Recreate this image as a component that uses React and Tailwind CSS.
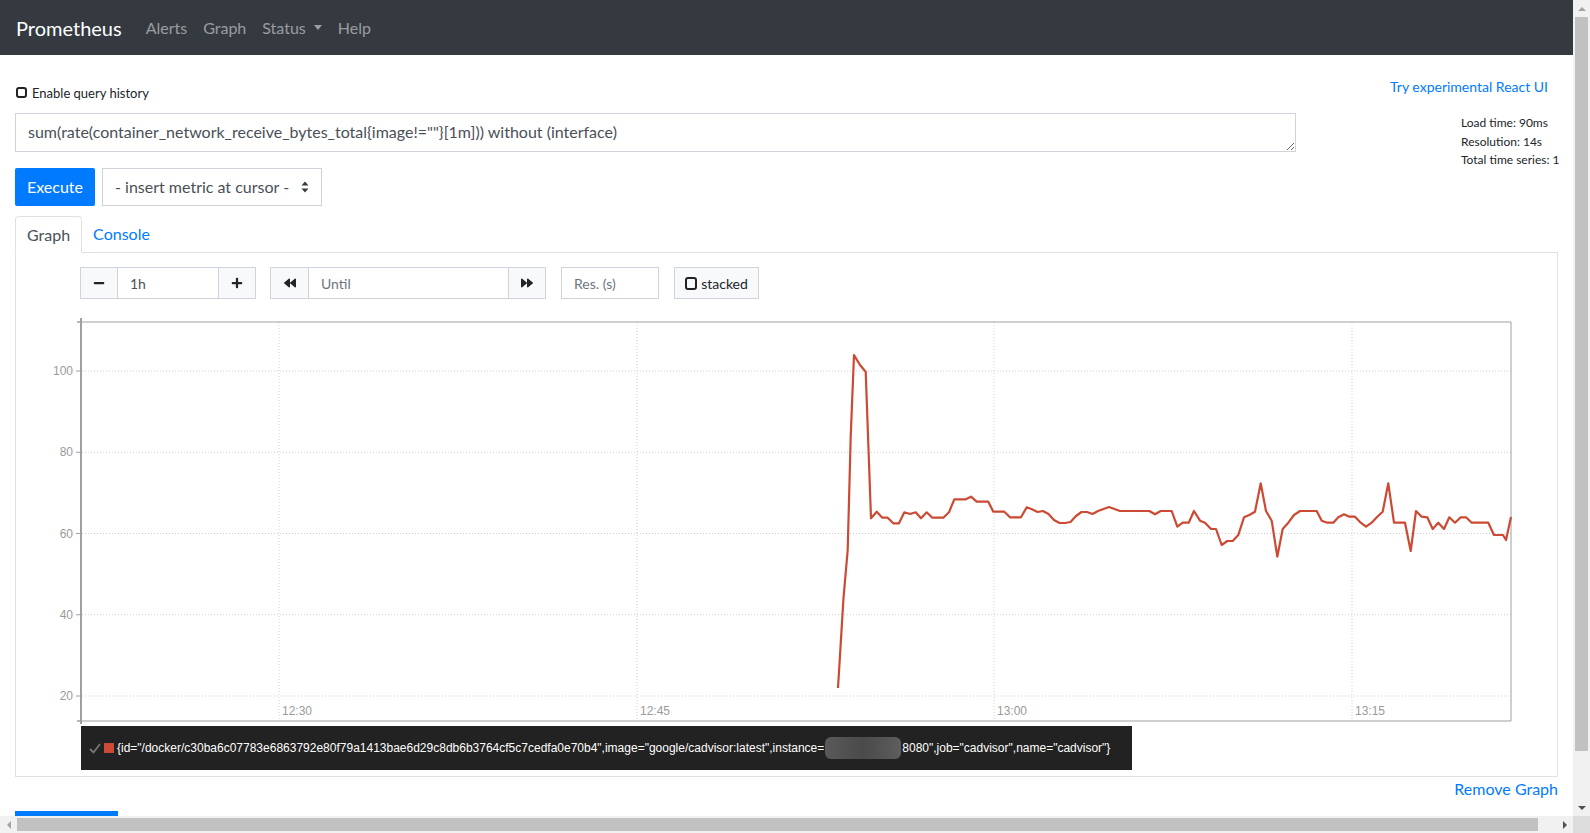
import { FaMinus, FaPlus, FaBackward, FaForward } from "react-icons/fa";

const Y_TICKS = [
  ["100", 371],
  ["80", 452.25],
  ["60", 533.5],
  ["40", 614.75],
  ["20", 696],
];

const X_TICKS = [
  ["12:30", 279],
  ["12:45", 637],
  ["13:00", 994],
  ["13:15", 1352],
];

// series points, page coordinates
const POINTS = [
  [838, 688], [843.5, 598], [847.7, 550], [850.7, 436.7], [854, 355], [860, 365], [865.7, 371.7],
  [871, 518.3], [876.7, 511.7], [882.3, 517.7], [887.7, 517.7], [893.3, 523.3], [899, 523.3],
  [904.3, 512.3], [910, 514], [915.7, 512.3], [921, 518.3], [926.7, 512.3], [932.3, 517.7],
  [943.3, 517.7], [949, 512.3], [954.3, 499.3], [965.7, 499.3], [971, 496.7], [976.7, 501.7],
  [988.3, 501.7], [993.3, 511.7], [1004.3, 511.7], [1010, 517.3], [1021, 517.3], [1026.7, 507.3],
  [1032, 509.3], [1037.5, 512], [1043, 511], [1048.5, 514], [1054, 520], [1059.5, 523], [1065, 523],
  [1070.5, 522], [1076, 516], [1081.5, 512], [1087, 512], [1092.5, 514], [1098, 511], [1103.5, 509],
  [1109, 507], [1114.5, 509], [1120, 511], [1125.5, 511], [1131, 511], [1136.5, 511], [1140, 511],
  [1149.3, 511], [1155, 514.3], [1160.7, 511], [1171.7, 511], [1177.3, 526.7], [1182.7, 522.7],
  [1188.7, 522.7], [1194, 511], [1200, 520.7], [1205, 522.7], [1211, 529], [1216, 529], [1221.7, 545],
  [1227.3, 541], [1232.7, 541], [1238.3, 535], [1244, 517.3], [1249.3, 515], [1255, 511.7],
  [1260.7, 483.3], [1266, 511], [1271.7, 520.7], [1277.3, 556.7], [1282.7, 529], [1288.3, 522.7],
  [1294, 515], [1300, 511], [1316.7, 511], [1321.7, 520.7], [1327.3, 522.7], [1333.3, 522.7],
  [1338.3, 517.3], [1344, 514.3], [1349.3, 516.7], [1355, 516.7], [1360.7, 522.7], [1366, 526.7],
  [1371.7, 522.7], [1377.3, 516.7], [1382.7, 511.7], [1388.3, 483.3], [1394, 522.7], [1405, 522.7],
  [1410.7, 551], [1416, 511], [1421.7, 516.7], [1427.3, 517.3], [1432.7, 529], [1438.3, 522.7],
  [1444, 529], [1449.3, 517.3], [1455, 522.7], [1460.7, 517.3], [1466, 517.3], [1471.7, 522.7],
  [1488.3, 522.7], [1494, 535], [1503, 535], [1506, 540], [1511, 517],
];

function CheckBox({ className = "" }) {
  return <span className={"inline-block rounded-[3px] border-2 border-[#222] " + className} />;
}

function Navbar() {
  return (
    <nav className="flex h-[55px] items-center bg-[#343a40] pl-[16px]">
      <span className="mr-[16px] text-[20px] text-white">Prometheus</span>
      {["Alerts", "Graph"].map((l) => (
        <span key={l} className="px-[8px] text-[16px] text-white/50">{l}</span>
      ))}
      <span className="flex items-center px-[8px] text-[16px] text-white/50">
        Status
        <span className="ml-[8px] inline-block h-0 w-0 border-x-[4.5px] border-t-[5px] border-x-transparent border-t-[#9a9da0]" />
      </span>
      <span className="px-[8px] text-[16px] text-white/50">Help</span>
    </nav>
  );
}

function Chart() {
  const line = POINTS.map((p) => p.join(",")).join(" ");
  return (
    <svg className="block" width="1541" height="425" viewBox="16 299 1541 425">
      <g stroke="#cfcfcf" strokeWidth="1" strokeDasharray="1 2">
        {Y_TICKS.map(([l, y]) => (
          <line key={l} x1="82" y1={y} x2="1511" y2={y} />
        ))}
        {X_TICKS.map(([l, x]) => (
          <line key={l} x1={x} y1="322" x2={x} y2="720" />
        ))}
      </g>
      <g stroke="#a0a0a0" fill="none">
        <line x1="81" y1="322" x2="1511" y2="322" strokeWidth="1" />
        <line x1="1511" y1="322" x2="1511" y2="721" strokeWidth="1" />
        <line x1="81" y1="721" x2="1511" y2="721" strokeWidth="1.2" />
        <line x1="81" y1="318" x2="81" y2="724" strokeWidth="2" />
        <line x1="77" y1="322" x2="81" y2="322" strokeWidth="1.5" />
        <line x1="77" y1="721" x2="81" y2="721" strokeWidth="1.5" />
        {Y_TICKS.map(([l, y]) => (
          <line key={l} x1="76" y1={y} x2="81" y2={y} strokeWidth="1" />
        ))}
      </g>
      <g className="font-['Liberation_Sans',sans-serif]" fontSize="12" fill="#9a9a9a">
        {Y_TICKS.map(([l, y]) => (
          <text key={l} x="73" y={y + 4} textAnchor="end">{l}</text>
        ))}
        {X_TICKS.map(([l, x]) => (
          <text key={l} x={x + 3} y="715">{l}</text>
        ))}
      </g>
      <polyline points={line} fill="none" stroke="#cc4a33" strokeWidth="2.2" strokeLinejoin="round" />
    </svg>
  );
}

function Legend() {
  return (
    <div className="ml-[65px] mt-[2px] flex h-[44px] w-[1051px] items-center bg-[#222] pl-[8px] font-['Liberation_Sans',sans-serif] text-[12px] text-white">
      <svg width="12" height="11" viewBox="0 0 12 11" className="mr-[3px]">
        <path d="M1 6 L4.5 9.5 L11 1" stroke="#777" strokeWidth="1.8" fill="none" />
      </svg>
      <span className="mr-[3px] inline-block h-[10px] w-[10px] bg-[#cc4a33]" />
      <span className="whitespace-nowrap">
        {'{id="/docker/c30ba6c07783e6863792e80f79a1413bae6d29c8db6b3764cf5c7cedfa0e70b4",image="google/cadvisor:latest",instance='}
      </span>
      <span className="mx-[1px] inline-block h-[22px] w-[76px] rounded-[6px] bg-gradient-to-r from-[#5a5a5a] via-[#4a4a4a] to-[#5e5e5e]" />
      <span className="whitespace-nowrap">{'8080",job="cadvisor",name="cadvisor"}'}</span>
    </div>
  );
}

function GraphPanel() {
  const btn = "flex h-[32px] items-center justify-center border border-[#ced4da] bg-[#f8f9fa] text-[12px] text-[#212529]";
  const inp = "h-[32px] border-y border-[#ced4da] bg-white px-[12px] text-[14px] text-[#495057] outline-none placeholder:text-[#6c757d]";
  return (
    <div className="border-x border-b border-[#dee2e6] pt-[14px] pb-[6px]">
      <div className="flex items-center pl-[64px]">
        <div className="flex">
          <span className={btn + " w-[38px]"}><FaMinus /></span>
          <input className={inp + " w-[100px]"} defaultValue="1h" />
          <span className={btn + " w-[38px]"}><FaPlus /></span>
        </div>
        <div className="ml-[14px] flex">
          <span className={btn + " w-[39px]"}><FaBackward /></span>
          <input className={inp + " w-[199px]"} placeholder="Until" />
          <span className={btn + " w-[38px]"}><FaForward /></span>
        </div>
        <input className={inp + " ml-[15px] w-[98px] border-x"} placeholder="Res. (s)" />
        <span className={btn + " ml-[15px] w-[85px] gap-[4px] text-[14px]"}>
          <CheckBox className="h-[13px] w-[12px]" />
          stacked
        </span>
      </div>
      <Chart />
      <Legend />
    </div>
  );
}

function VScrollbar() {
  return (
    <div className="flex w-[17px] flex-col bg-[#f1f1f1]">
      <div className="flex h-[17px] items-center justify-center">
        <span className="inline-block h-0 w-0 border-x-[4px] border-b-[4px] border-x-transparent border-b-[#a3a3a3]" />
      </div>
      <div className="mx-[2px] h-[734px] bg-[#c1c1c1]" />
      <div className="flex-1" />
      <div className="flex h-[17px] items-center justify-center">
        <span className="inline-block h-0 w-0 border-x-[4px] border-t-[4px] border-x-transparent border-t-[#505050]" />
      </div>
    </div>
  );
}

function HScrollbar() {
  return (
    <div className="flex h-[17px] bg-[#f1f1f1]">
      <div className="flex w-[17px] items-center justify-center">
        <span className="inline-block h-0 w-0 border-y-[4px] border-r-[4px] border-y-transparent border-r-[#a3a3a3]" />
      </div>
      <div className="my-[2px] w-[1521px] bg-[#c1c1c1]" />
      <div className="flex-1" />
      <div className="flex w-[17px] items-center justify-center">
        <span className="inline-block h-0 w-0 border-y-[4px] border-l-[4px] border-y-transparent border-l-[#505050]" />
      </div>
      <div className="w-[17px] bg-[#dcdcdc]" />
    </div>
  );
}

export default function App() {
  return (
    <div className="flex h-[833px] w-[1590px] flex-col overflow-hidden bg-white font-['Lato',sans-serif] text-[#212529]">
      <div className="flex h-[816px] min-h-0">
        <div className="min-w-0 flex-1 overflow-hidden">
          <Navbar />
          <main className="px-[15px]">
            <div className="flex h-[58px] justify-between">
              <label className="flex items-start gap-[5px] pt-[28px] text-[13px] leading-[20px]">
                <CheckBox className="ml-[1px] mt-[4px] h-[11px] w-[11px]" />
                Enable query history
              </label>
              <span className="pr-[10px] pt-[22px] text-[14px] leading-[20px] text-[#007bff]">Try experimental React UI</span>
            </div>
            <div className="flex">
              <textarea
                className="h-[39px] w-[1281px] border border-[#ced4da] px-[12px] py-[6px] text-[16px] leading-[24px] text-[#495057] outline-none"
                defaultValue={'sum(rate(container_network_receive_bytes_total{image!=""}[1m])) without (interface)'}
              />
              <div className="ml-auto h-[39px] w-[97px] pt-[1px] text-[12px] leading-[18.5px]">
                <div>Load time: 90ms</div>
                <div>Resolution: 14s</div>
                <div className="whitespace-nowrap">Total time series: 1</div>
              </div>
            </div>
            <div className="mt-[16px] flex gap-[7px]">
              <button className="h-[38px] w-[80px] rounded-[2px] bg-[#007bff] text-[16px] text-white">Execute</button>
              <div className="flex h-[38px] w-[220px] items-center justify-between border border-[#ced4da] pl-[12px] pr-[12px] text-[16px] text-[#495057]">
                <span>- insert metric at cursor -</span>
                <svg width="8" height="12" viewBox="0 0 8 12">
                  <path d="M4 0.5 L7.5 4.5 H0.5 Z M4 11.5 L7.5 7.5 H0.5 Z" fill="#343a40" />
                </svg>
              </div>
            </div>
            <ul className="mt-[10px] flex border-b border-[#dee2e6]">
              <li className="-mb-px rounded-t-[4px] border border-[#dee2e6] border-b-white bg-white px-[11px] pt-[6px] pb-[5px] text-[16px] leading-[24px] text-[#495057]">Graph</li>
              <li className="px-[11px] py-[6px] text-[16px] leading-[24px] text-[#007bff]">Console</li>
            </ul>
            <GraphPanel />
            <div className="flex justify-end">
              <span className="text-[16px] leading-[24px] text-[#007bff]">Remove Graph</span>
            </div>
            <button aria-label="Add Graph" className="mt-[10px] block h-[38px] w-[103px] bg-[#007bff]" />
          </main>
        </div>
        <VScrollbar />
      </div>
      <HScrollbar />
    </div>
  );
}
